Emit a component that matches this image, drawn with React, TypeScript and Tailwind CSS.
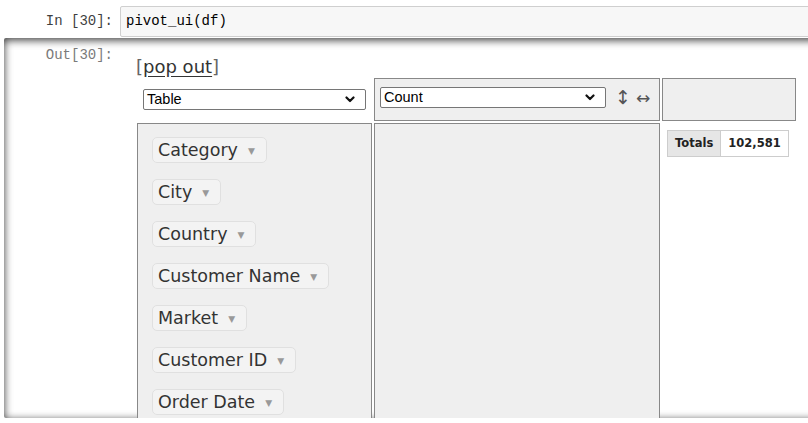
const attributes = [
  "Category",
  "City",
  "Country",
  "Customer Name",
  "Market",
  "Customer ID",
  "Order Date",
];

function Chevron() {
  return (
    <svg width="10" height="7" viewBox="0 0 10 7" className="shrink-0">
      <path
        d="M1.5 1.5 L5 5 L8.5 1.5"
        fill="none"
        stroke="#111"
        strokeWidth="2.2"
        strokeLinecap="round"
        strokeLinejoin="round"
      />
    </svg>
  );
}

function FakeSelect({ label, className }: { label: string; className: string }) {
  return (
    <div
      className={`flex items-center justify-between rounded-[2px] border border-[#767676] bg-white pl-[3px] pr-[10px] font-['Liberation_Sans',Arial,sans-serif] text-[14.5px] leading-none text-black ${className}`}
    >
      <span>{label}</span>
      <Chevron />
    </div>
  );
}

function AttrPill({ name }: { name: string }) {
  return (
    <span className="flex h-[26px] items-center whitespace-nowrap rounded-[5px] border border-[#e0e0e0] bg-[#f3f3f3] pl-[5px] pr-[11px] pt-[2px] font-['DejaVu_Sans',Verdana,sans-serif] text-[17.5px] leading-none text-[#333]">
      {name}
      <span className="ml-[10px] text-[9px] text-[#999]">▼</span>
    </span>
  );
}

export default function App() {
  return (
    <div className="relative h-[423px] w-[808px] overflow-hidden bg-white">
      <div className="flex pt-[6px]">
        <div className="flex w-[120px] shrink-0 items-center justify-end pr-[7px] font-['Liberation_Mono',monospace] text-[14px] text-[#3f3f3f]">
          In [30]:
        </div>
        <div className="flex h-[31px] w-[720px] shrink-0 items-center rounded-[2px] border border-[#cfcfcf] bg-[#f7f7f7] pl-[5px] font-['Liberation_Mono',monospace] text-[14px] text-black">
          pivot_ui(df)
        </div>
      </div>

      <div className="ml-[4px] mt-[1px] flex h-[380px] w-[830px] overflow-hidden rounded-[2px] shadow-[inset_0_2px_8px_rgba(0,0,0,0.8)]">
        <div className="w-[116px] shrink-0 pr-[7px] pt-[9px] text-right font-['Liberation_Mono',monospace] text-[14px] leading-[17px] text-[#7a7a7a]">
          Out[30]:
        </div>
        <div className="flex flex-col pl-[16px] pt-[18px]">
          <div className="h-[23px] font-['DejaVu_Sans',sans-serif] text-[18px] leading-[22px] text-[#666]">
            [<span className="text-[#333] underline underline-offset-[3px]">pop out</span>]
          </div>
          <div className="ml-[1px] grid grid-cols-[235px_286px_134px] grid-rows-[43px_400px] gap-[2px]">
            <div className="flex items-center pl-[6px]">
              <FakeSelect label="Table" className="h-[21px] w-[223px]" />
            </div>
            <div className="flex items-start border border-[#888] bg-[#efefef] pl-[5px] pt-[8px]">
              <FakeSelect label="Count" className="h-[21px] w-[226px]" />
              <span className="ml-[9px] mt-[-1px] font-['DejaVu_Sans',sans-serif] text-[19px] leading-[22px] text-[#555]">
                ↕
              </span>
              <span className="ml-[5px] mt-[0px] font-['DejaVu_Sans',sans-serif] text-[17px] leading-[22px] text-[#555]">
                ↔
              </span>
            </div>
            <div className="border border-[#888] bg-[#efefef]" />

            <div className="flex flex-col items-start gap-[16px] border border-[#888] bg-[#efefef] pl-[14px] pt-[13px]">
              {attributes.map((name) => (
                <AttrPill key={name} name={name} />
              ))}
            </div>
            <div className="border border-[#888] bg-[#efefef]" />
            <div className="pl-[5px] pt-[7px]">
              <table className="border-collapse font-['DejaVu_Sans',Verdana,sans-serif] text-[11.5px] font-bold text-[#222]">
                <tbody>
                  <tr>
                    <th className="h-[26px] border border-[#cdcdcd] bg-[#e6e6e6] px-[7px] text-left">
                      Totals
                    </th>
                    <td className="h-[26px] border border-[#cdcdcd] bg-white px-[7px] text-right">
                      102,581
                    </td>
                  </tr>
                </tbody>
              </table>
            </div>
          </div>
        </div>
      </div>
    </div>
  );
}
